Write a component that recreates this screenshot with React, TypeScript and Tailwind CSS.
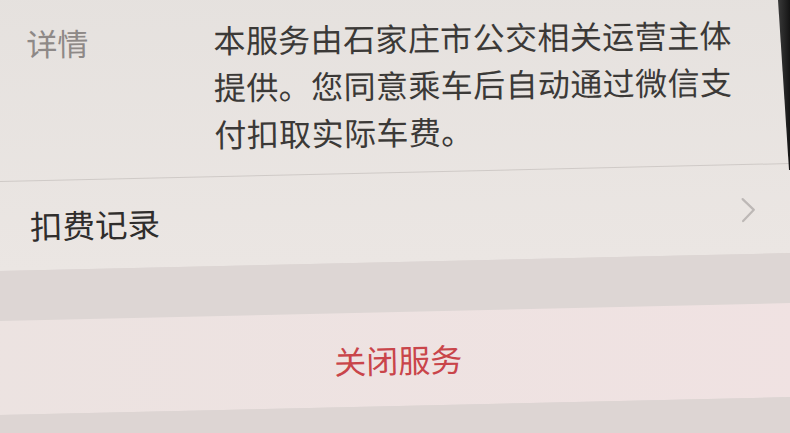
import React from "react";

const cjk = { fontFamily: '"Noto Sans CJK SC", "Noto Sans", sans-serif' };

function Chevron() {
  return (
    <svg width="18" height="28" viewBox="0 0 18 28" fill="none">
      <path d="M3 3 L14 14 L3 25" stroke="#bdb8b6" strokeWidth="2.2" strokeLinecap="round" strokeLinejoin="round" />
    </svg>
  );
}

export default function App() {
  return (
    <div className="relative w-[790px] h-[433px] overflow-hidden bg-[#ddd6d4]" style={cjk}>
      <div className="w-[830px] -ml-[20px] -mt-[30px] h-[500px] -rotate-[1.3deg] origin-center flex flex-col bg-[#ddd6d4]">
        {/* service info card */}
        <div className="flex flex-col bg-gradient-to-b from-[#e5e1de] to-[#ebe6e3]">
          <div className="flex pt-[42px] pb-[19px] pl-[50px] pr-[30px]">
            <div className="w-[187px] shrink-0 text-[31px] leading-[47px] text-[#8e8987] rotate-[0.6deg]">详情</div>
            <div className="w-[540px] text-[32px] leading-[47px] text-[#3b3937] tracking-[0.4px] rotate-[0.7deg] origin-left">
              本服务由石家庄市公交相关运营主体提供。您同意乘车后自动通过微信支付扣取实际车费。
            </div>
          </div>
          <div className="h-px bg-[#cfcac7]" />
          <div className="h-[89px] flex items-center justify-between pl-[50px] pr-[52px]">
            <span className="text-[32.5px] text-[#2f2d2c]">扣费记录</span>
            <Chevron />
          </div>
        </div>
        {/* spacer between groups */}
        <div className="h-[50px] bg-[#ddd6d4]" />
        {/* close service button */}
        <div className="h-[94px] flex items-center justify-center bg-gradient-to-r from-[#ece3e1] to-[#f0e2e2]">
          <span className="text-[32px] text-[#c9454a]">关闭服务</span>
        </div>
        <div className="flex-1 bg-[#ddd5d3]" />
      </div>
      {/* phone edge along the top right */}
      <svg className="absolute right-0 top-0" width="14" height="170" viewBox="0 0 14 170">
        <defs>
          <linearGradient id="edge" x1="0" y1="0" x2="1" y2="0">
            <stop offset="0" stopColor="#3a3a3a" />
            <stop offset="1" stopColor="#141414" />
          </linearGradient>
        </defs>
        <polygon points="2,0 14,0 14,170 13,170" fill="url(#edge)" />
      </svg>
    </div>
  );
}
